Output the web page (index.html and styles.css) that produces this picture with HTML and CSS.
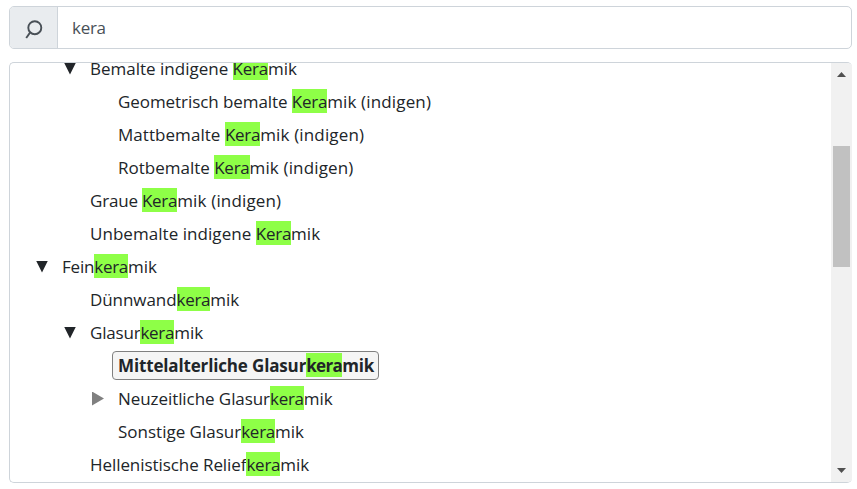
FILE: index.html
```
<!DOCTYPE html>
<html lang="de">
<head>
<meta charset="utf-8">
<title>Thesaurus</title>
<link rel="stylesheet" href="styles.css">
</head>
<body>
<div class="search">
  <div class="addon"><svg width="18" height="20" viewBox="0 0 18 20"><circle cx="9.8" cy="7.7" r="6.5"/><path d="M5.2 12.4L1.2 18"/></svg></div>
  <div class="query">kera</div>
</div>
<div class="panel">
  <div class="tree">
    <div class="row l2"><span class="toggle open"></span><span class="label">Bemalte indigene <mark>Kera</mark>mik</span></div>
    <div class="row l3"><span class="toggle"></span><span class="label"><span class="snug">Geometrisch bemalte </span><mark>Kera</mark><span class="tail">mik (indigen)</span></span></div>
    <div class="row l3"><span class="toggle"></span><span class="label wide">Mattbemalte <mark>Kera</mark><span class="tail">mik (indigen)</span></span></div>
    <div class="row l3"><span class="toggle"></span><span class="label">Rotbemalte <mark>Kera</mark><span class="tail">mik (indigen)</span></span></div>
    <div class="row l2"><span class="toggle"></span><span class="label"><span class="tight">Graue </span><mark>Kera</mark><span class="tail">mik (indigen)</span></span></div>
    <div class="row l2"><span class="toggle"></span><span class="label wide">Unbemalte indigene <mark>Kera</mark>mik</span></div>
    <div class="row l1"><span class="toggle open"></span><span class="label"><span class="tight">Fein</span><mark>kera</mark>mik</span></div>
    <div class="row l2"><span class="toggle"></span><span class="label"><span class="snug">Dünnwand</span><mark>kera</mark>mik</span></div>
    <div class="row l2"><span class="toggle open"></span><span class="label"><span class="tight">Glasur</span><mark>kera</mark>mik</span></div>
    <div class="row l3"><span class="toggle"></span><span class="label selected">Mittelalterliche Glasur<mark>kera</mark>mik</span></div>
    <div class="row l3"><span class="toggle closed"></span><span class="label"><span class="snug">Neuzeitliche Glasur</span><mark>kera</mark>mik</span></div>
    <div class="row l3"><span class="toggle"></span><span class="label">Sonstige Glasur<mark>kera</mark>mik</span></div>
    <div class="row l2"><span class="toggle"></span><span class="label"><span class="snug">Hellenistische Relief</span><mark>kera</mark>mik</span></div>
  </div>
  <div class="scrollbar">
    <svg width="9" height="5" viewBox="0 0 9 5"><path d="M0 5L4.5 0L9 5z"/></svg>
    <div class="track"><div class="thumb"></div></div>
    <svg width="9" height="5" viewBox="0 0 9 5"><path d="M0 0L4.5 5L9 0z"/></svg>
  </div>
</div>
</body>
</html>
```
FILE: styles.css
```
* { box-sizing: border-box; }
body {
  margin: 0;
  padding: 6px 5px 0 9px;
  height: 489px;
  overflow: hidden;
  background: #fff;
  color: #212529;
  font: 400 17px/24px "Open Sans", "Noto Sans", sans-serif;
}
.search {
  display: flex;
  height: 43px;
  border: 1px solid #ced4da;
  border-radius: 5px;
  overflow: hidden;
}
.addon {
  width: 48px;
  display: flex;
  align-items: center;
  justify-content: center;
  background: #e9ecef;
  border-right: 1px solid #ced4da;
}
.addon svg { fill: none; stroke: #495057; stroke-width: 1.9; margin-top: 5px; }
.query { padding: 9px 0 0 14px; color: #495057; letter-spacing: -0.3px; }
.panel {
  display: flex;
  margin-top: 13px;
  height: 421px;
  border: 1px solid #ced4da;
  border-right: 0;
  border-radius: 5px;
  overflow: hidden;
}
.tree { flex: 1; margin-top: -11px; }
.row { display: flex; align-items: center; height: 33px; white-space: pre; }
.l1 { padding-left: 24px; }
.l2 { padding-left: 52px; }
.l3 { padding-left: 80px; }
.toggle { width: 22px; display: flex; }
.toggle::before { content: ""; }
.open::before {
  margin-left: 2px;
  width: 12px;
  height: 12px;
  background: #212529;
  clip-path: polygon(0 0, 100% 0, 50% 100%);
}
.closed::before {
  margin-left: 2px;
  width: 12px;
  height: 14px;
  background: #808080;
  clip-path: polygon(0 0, 100% 50%, 0 100%);
}
.label { padding: 2px 5px 1px; border: 1px solid transparent; height: 29px; }
.wide { letter-spacing: 0.05px; }
.snug { letter-spacing: -0.07px; }
.tight { letter-spacing: -0.2px; }
.selected {
  padding-right: 4px;
  font-weight: 700;
  letter-spacing: -0.15px;
  background: #f5f5f5;
  border-color: #808080;
  border-radius: 4px;
}
mark {
  display: inline-block;
  height: 24px;
  margin-top: -1px;
  padding-top: 1px;
  vertical-align: top;
  background: #8eff47;
  color: inherit;
  letter-spacing: -0.27px;
}
.selected mark { letter-spacing: -0.65px; }
.tail { letter-spacing: 0.15px; }
.scrollbar {
  width: 21px;
  display: flex;
  flex-direction: column;
  align-items: center;
  padding: 9px 0;
  background: #f1f1f1;
}
.scrollbar svg { fill: #505050; }
.track { flex: 1; padding-top: 69px; }
.thumb { width: 17px; height: 121px; background: #c1c1c1; }
```
